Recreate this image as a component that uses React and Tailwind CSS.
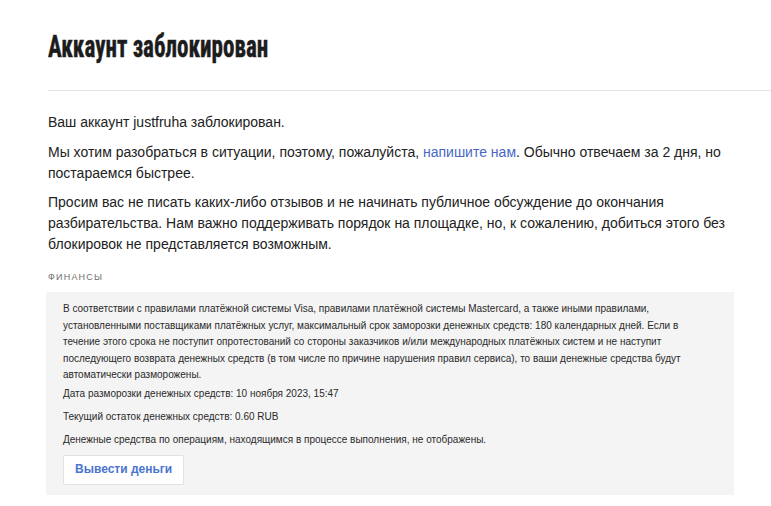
export default function App() {
  return (
    <div className="min-h-screen bg-white pl-12 text-[#222]" style={{ fontFamily: '"Liberation Sans", Arial, sans-serif' }}>
      <div className="pt-[29px]">
        <h1
          className="inline-block origin-left scale-x-[0.72] text-[32px] font-bold leading-[34px] text-[#1c1c1c] [-webkit-text-stroke:0.5px_#1c1c1c]"
          style={{ fontFamily: '"Liberation Sans Narrow", "Roboto Condensed", "Liberation Sans", sans-serif' }}
        >
          Аккаунт заблокирован
        </h1>
      </div>
      <div className="mt-[26px] border-b border-[#e3e3e3]" />
      <div className="w-[686px] pt-[21px] text-[14px] leading-[21px]">
        <p>Ваш аккаунт justfruha заблокирован.</p>
        <p className="mt-[9px]">
          Мы хотим разобраться в ситуации, поэтому, пожалуйста,{" "}
          <a className="text-[#4a67c6]">напишите нам</a>. Обычно отвечаем за 2 дня, но постараемся быстрее.
        </p>
        <p className="mt-[8px]">
          Просим вас не писать каких-либо отзывов и не начинать публичное обсуждение до окончания разбирательства. Нам
          важно поддерживать порядок на площадке, но, к сожалению, добиться этого без блокировок не представляется
          возможным.
        </p>
        <div className="mt-[16px] text-[9px] uppercase leading-[12px] tracking-[1.2px] text-[#707070]">Финансы</div>
        <div className="-ml-0.5 mt-[9px] bg-[#f4f4f4] px-[17px] pb-[10px] pt-[9px] text-[10px] leading-[16.6px] text-[#2a2a2a]">
          <p className="pr-2">
            В соответствии с правилами платёжной системы Visa, правилами платёжной системы Mastercard, а также иными
            правилами, установленными поставщиками платёжных услуг, максимальный срок заморозки денежных средств: 180
            календарных дней. Если в течение этого срока не поступит опротестований со стороны заказчиков и/или
            международных платёжных систем и не наступит последующего возврата денежных средств (в том числе по причине
            нарушения правил сервиса), то ваши денежные средства будут автоматически разморожены.
          </p>
          <p className="mt-[2px]">Дата разморозки денежных средств: 10 ноября 2023, 15:47</p>
          <p className="mt-[6px]">Текущий остаток денежных средств: 0.60 RUB</p>
          <p className="mt-[7px]">Денежные средства по операциям, находящимся в процессе выполнения, не отображены.</p>
          <button className="mt-[6px] h-[30px] rounded-[2px] border border-[#e2e2e2] bg-white px-[11px] text-[12px] font-bold text-[#4a74cf]">
            Вывести деньги
          </button>
        </div>
      </div>
    </div>
  );
}
